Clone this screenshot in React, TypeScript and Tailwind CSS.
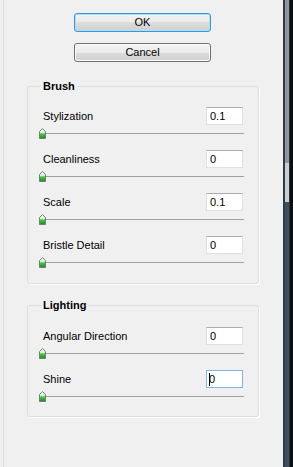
import React from "react";

type Row = {
    label: string;
    value: string;
    focused?: boolean;
};

const brushRows: Row[] = [
    { label: "Stylization", value: "0.1" },
    { label: "Cleanliness", value: "0" },
    { label: "Scale", value: "0.1" },
    { label: "Bristle Detail", value: "0" },
];

const lightingRows: Row[] = [
    { label: "Angular Direction", value: "0" },
    { label: "Shine", value: "0", focused: true },
];

// little green slider knob, pointing up
const Thumb = () => (
    <svg width="7" height="11" viewBox="0 0 7 11" className="absolute left-0 top-0">
        <defs>
            <linearGradient id="knob" x1="0" y1="0" x2="0" y2="1">
                <stop offset="0%" stopColor="#f6fff6" />
                <stop offset="40%" stopColor="#d2efd2" />
                <stop offset="55%" stopColor="#4cc24c" />
                <stop offset="100%" stopColor="#1d8a1d" />
            </linearGradient>
        </defs>
        <path d="M3.5 0.5 L6.5 3.5 L6.5 10.5 L0.5 10.5 L0.5 3.5 Z" fill="url(#knob)" stroke="#6f806f" strokeWidth="1" />
    </svg>
);

const SliderRow: React.FC<{ row: Row }> = ({ row }) => (
    <div className="flex h-[43px] flex-col">
        <div className="flex h-[18px] items-center justify-between">
            <span className="leading-[13px]">{row.label}</span>
            <div
                className={
                    row.focused
                        ? "flex h-[18px] w-[37px] items-center border border-[#7eb4ea] bg-white pl-[2px]"
                        : "flex h-[18px] w-[37px] items-center border border-[#dde1e6] border-t-[#abadb3] bg-white pl-[3px]"
                }
            >
                {row.focused && <span className="h-[13px] w-px bg-black" />}
                <span className={row.focused ? "-ml-[1px] leading-[13px]" : "leading-[13px]"}>{row.value}</span>
            </div>
        </div>
        <div className="relative -ml-[4px] -mr-[1px] mt-[3px] h-[11px]">
            <div className="absolute left-[3px] right-0 top-[5px] h-px bg-[#a0a0a0]" />
            <Thumb />
        </div>
    </div>
);

const Group: React.FC<{ title: string; rows: Row[]; top: string; gap: string; bottom: string }> = ({ title, rows, top, gap, bottom }) => (
    <div className={`ml-[23px] flex w-[232px] flex-col rounded-[3px] border border-[#d5dfe5] shadow-[1px_1px_0_#ffffff] ${top} ${bottom}`}>
        <div className="-mt-[7px] ml-[13px] h-[13px] self-start bg-[#f0f0f0] px-[2px] font-bold leading-[13px]">{title}</div>
        <div className={`flex flex-col px-[15px] ${gap}`}>
            {rows.map((row) => (
                <SliderRow key={row.label} row={row} />
            ))}
        </div>
    </div>
);

const App: React.FC = () => {
    return (
        <div className="flex h-[467px] w-[293px] overflow-hidden font-['Liberation_Sans',Arial,sans-serif] text-[11px] text-black">
            <div className="flex w-[283px] bg-[#f0f0f0]">
                <div className="w-[3px]" />
                <div className="w-px bg-[#dadada]" />
                <div className="flex flex-1 flex-col">
                    <button className="ml-[70px] mt-[13px] h-[19px] w-[137px] rounded-[3px] border border-[#3c96d6] bg-[linear-gradient(#f2f2f2,#ebebeb_50%,#dddddd_50%,#cfcfcf)] leading-[17px] shadow-[inset_0_0_0_1px_#a6e2fb]">
                        OK
                    </button>
                    <button className="ml-[70px] mt-[11px] h-[19px] w-[137px] rounded-[3px] border border-[#707070] bg-[linear-gradient(#f2f2f2,#ebebeb_50%,#dddddd_50%,#cfcfcf)] leading-[17px] shadow-[inset_0_0_0_1px_#fbfbfb]">
                        Cancel
                    </button>
                    <Group title="Brush" rows={brushRows} top="mt-[24px]" gap="mt-[14px]" bottom="pb-[4px]" />
                    <Group title="Lighting" rows={lightingRows} top="mt-[21px]" gap="mt-[15px]" bottom="pb-[3px]" />
                </div>
            </div>
            {/* dark window edge on the right */}
            <div className="flex w-[10px]">
                <div className="w-[2px] bg-[#2f3a44]" />
                <div className="flex w-[4px] flex-col">
                    <div className="h-[163px] bg-[#8f969c]" />
                    <div className="h-[39px] bg-[#c9ced2]" />
                    <div className="flex-1 bg-[#3e4f5c]" />
                </div>
                <div className="w-px bg-[#2a333b]" />
                <div className="w-[3px] bg-[#0b0d0f]" />
            </div>
        </div>
    );
};

export default App;
